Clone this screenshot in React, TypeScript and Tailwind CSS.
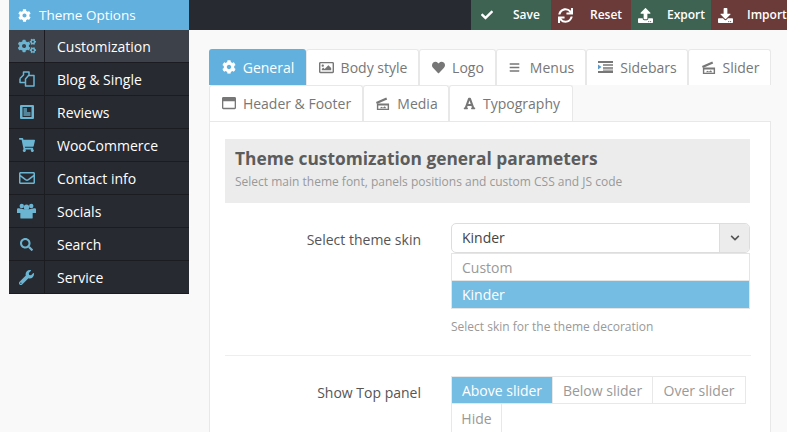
import React from "react";
import {
  FaCog, FaCogs, FaShoppingCart, FaRegEnvelope, FaSearch, FaWrench,
  FaCheck, FaSync, FaUpload, FaDownload, FaRegImage, FaHeart, FaBars, FaRegWindowMaximize,
  FaFont, FaChevronDown,
} from "react-icons/fa";

type IconT = React.ComponentType<{ className?: string }>;

const ReviewsIcon: IconT = ({ className }) => (
  <svg viewBox="0 0 14 14" className={className} fill="currentColor">
    <path fillRule="evenodd" d="M1 0h12a1 1 0 0 1 1 1v12a1 1 0 0 1-1 1H1a1 1 0 0 1-1-1V1a1 1 0 0 1 1-1zm1.5 2v10h9V2h-9z" />
    <path d="M3.5 3H7v4h3.5v4h-7z" opacity=".65" />
  </svg>
);

const BlogIcon: IconT = ({ className }) => (
  <svg viewBox="0 0 16 16" className={className} fill="none" stroke="currentColor" strokeWidth="1.5" strokeLinejoin="round">
    <path d="M1 7.5 4.5 4V1H10v3" />
    <path d="M1 7.5V11.5h5" />
    <path d="M6.5 8 9.5 4.5H15V15H6.5z" />
  </svg>
);

const SocialsIcon: IconT = ({ className }) => (
  <svg viewBox="0 0 20 16" className={className} fill="currentColor">
    <circle cx="5" cy="2.7" r="2.3" />
    <circle cx="15" cy="2.7" r="2.3" />
    <circle cx="10" cy="4" r="2.8" />
    <path d="M0 6.5 C0 5.3 1 5 2 5.2 L7 6.2 H13 L18 5.2 C19 5 20 5.3 20 6.5 V10 H16.5 V15 C16.5 15.6 16 16 15.4 16 H4.6 C4 16 3.5 15.6 3.5 15 V10 H0z" />
  </svg>
);

const SliderIcon: IconT = ({ className }) => (
  <svg viewBox="0 0 16 16" className={className} fill="currentColor">
    <path d="M1 6.5 12 1.5l1 2.2L2 8.6z" />
    <path fillRule="evenodd" d="M2 8h13v7H2V8zm1.5 2v3.5h10V10h-10z" />
    <path d="M5 13l2-1.5 1.5 1 2-1.5 1.5 2z" />
  </svg>
);

const SidebarsIcon: IconT = ({ className }) => (
  <svg viewBox="0 0 15 12" className={className} fill="currentColor">
    <path d="M0 0h15v2H0zM5 3.3h10v1.4H5zM5 6.3h10v1.4H5zM0 10h15v2H0z" />
    <path d="M0 3.5 3.5 6 0 8.5z" fill="#5c9ac9" />
    <path d="M5 8.6h10v1H5z" />
  </svg>
);

const side: { label: string; Icon: IconT; size: string; active?: boolean }[] = [
  { label: "Customization", Icon: FaCogs, size: "w-[18px] h-[18px]", active: true },
  { label: "Blog & Single", Icon: BlogIcon, size: "w-[16px] h-[16px]" },
  { label: "Reviews", Icon: ReviewsIcon, size: "w-[14px] h-[14px]" },
  { label: "WooCommerce", Icon: FaShoppingCart, size: "w-[16px] h-[16px]" },
  { label: "Contact info", Icon: FaRegEnvelope, size: "w-[16px] h-[16px]" },
  { label: "Socials", Icon: SocialsIcon, size: "w-[19px] h-[16px]" },
  { label: "Search", Icon: FaSearch, size: "w-[13px] h-[13px]" },
  { label: "Service", Icon: FaWrench, size: "w-[15px] h-[15px]" },
];

const actions: { label: string; Icon: IconT; bg: string; pad: string; gap: string; size: string }[] = [
  { label: "Save", Icon: FaCheck, bg: "bg-[#3f6353]", pad: "pl-[10px]", gap: "gap-[20px]", size: "w-[12px] h-[12px]" },
  { label: "Reset", Icon: FaSync, bg: "bg-[#6b3b39]", pad: "pl-[7px]", gap: "gap-[17px]", size: "w-[15px] h-[15px]" },
  { label: "Export", Icon: FaUpload, bg: "bg-[#3f6353]", pad: "pl-[7px]", gap: "gap-[14px]", size: "w-[15px] h-[15px]" },
  { label: "Import", Icon: FaDownload, bg: "bg-[#6b3b39]", pad: "pl-[7px]", gap: "gap-[14px]", size: "w-[15px] h-[15px]" },
];

type T = { label: string; Icon: IconT; w: string; size: string; active?: boolean; gap?: string };

const row1: T[] = [
  { label: "General", Icon: FaCog, w: "w-[97px]", size: "w-[14px] h-[14px]", active: true },
  { label: "Body style", Icon: FaRegImage, w: "w-[113px]", size: "w-[15px] h-[15px]" },
  { label: "Logo", Icon: FaHeart, w: "w-[77px]", size: "w-[13px] h-[13px]" },
  { label: "Menus", Icon: FaBars, w: "w-[90px]", size: "w-[11px] h-[11px]", gap: "gap-[10px]" },
  { label: "Sidebars", Icon: SidebarsIcon, w: "w-[102px]", size: "w-[15px] h-[12px]" },
  { label: "Slider", Icon: SliderIcon, w: "w-[83px]", size: "w-[15px] h-[15px]" },
];
const row2: T[] = [
  { label: "Header & Footer", Icon: FaRegWindowMaximize, w: "w-[154px]", size: "w-[14px] h-[14px]" },
  { label: "Media", Icon: SliderIcon, w: "w-[86px]", size: "w-[15px] h-[15px]" },
  { label: "Typography", Icon: FaFont, w: "w-[124px]", size: "w-[13px] h-[13px]" },
];

const Tab = ({ t }: { t: T }) => (
  <div
    className={`${t.w} ${t.gap ?? "gap-[7px]"} h-[36px] shrink-0 flex items-center justify-center rounded-t-[3px] text-[14px] pl-[1px] ${
      t.active ? "bg-[#61b0de] text-white" : "bg-white text-[#777777] border border-b-0 border-[#e8e8e8] pb-[1px]"
    }`}
  >
    <t.Icon className={t.size} />
    <span>{t.label}</span>
  </div>
);

export default function App() {
  return (
    <div className="w-[787px] h-[432px] overflow-hidden flex bg-[#f9f9f9] pl-[9px] font-['Open_Sans',sans-serif]">
      <aside className="w-[180px] shrink-0">
        <div className="h-[30px] bg-[#61b0de] text-white text-[13.5px] flex items-center pl-[9px] gap-[8px]">
          <FaCog className="w-[13px] h-[13px]" />
          <span>Theme Options</span>
        </div>
        {side.map(({ label, Icon, active, size }) => (
          <div
            key={label}
            className={`h-[33px] flex border-b border-[#1a1c21] text-white text-[14px] font-medium ${
              active ? "bg-[#3d4149]" : "bg-[#272a31]"
            }`}
          >
            <div className="w-[36px] flex items-center justify-center border-r border-[#1a1c21] text-[#6bb5d2]">
              <Icon className={size} />
            </div>
            <div className="flex items-center pl-[12px]">{label}</div>
          </div>
        ))}
      </aside>
      <main className="flex-1 min-w-0">
        <div className="h-[30px] bg-[#272a31] flex pl-[282px] text-white text-[12px] font-semibold">
          {actions.map(({ label, Icon, bg, pad, gap, size }) => (
            <div key={label} className={`w-[80px] shrink-0 ${bg} ${pad} ${gap} flex items-center`}>
              <Icon className={size} />
              <span>{label}</span>
            </div>
          ))}
        </div>
        <div className="w-[562px] ml-[20px] mt-[19px]">
          <div className="flex">
            {row1.map((t) => <Tab key={t.label} t={t} />)}
          </div>
          <div className="flex">
            {row2.map((t) => <Tab key={t.label} t={t} />)}
          </div>
          <div className="bg-white border border-[#e8e8e8] px-[15px] pt-[17px] pb-[40px]">
            <div className="h-[64px] w-[525px] bg-[#ececec] px-[10px] pt-[7px]">
              <div className="text-[17.35px] font-bold text-[#5c5c5c] leading-[24px]">Theme customization general parameters</div>
              <div className="text-[12px] text-[#999999] leading-[20px] mt-[2px]">Select main theme font, panels positions and custom CSS and JS code</div>
            </div>
            <div className="flex mt-[20px]">
              <div className="w-[196px] pt-[6px] text-right text-[14px] text-[#555555]">Select theme skin</div>
              <div className="ml-[30px] w-[299px]">
                <div className="h-[30px] border border-[#dddddd] rounded-[5px] flex overflow-hidden bg-white">
                  <div className="flex-1 pl-[10px] text-[14px] leading-[28px] text-[#444444]">Kinder</div>
                  <div className="w-[30px] bg-[#ececec] border-l border-[#dddddd] flex items-center justify-center text-[#555555]">
                    <FaChevronDown className="w-[10px] h-[10px]" />
                  </div>
                </div>
                <div className="border border-[#e5e5e5] text-[14px]">
                  <div className="h-[27px] pl-[10px] leading-[27px] text-[#999999] border-b border-[#e5e5e5]">Custom</div>
                  <div className="h-[27px] pl-[10px] leading-[27px] text-white bg-[#75bde3]">Kinder</div>
                </div>
                <div className="text-[12px] text-[#999999] mt-[9px] leading-[18px]">Select skin for the theme decoration</div>
              </div>
            </div>
            <div className="w-[526px] border-t border-[#eeeeee] mt-[19px]"></div>
            <div className="flex mt-[20px]">
              <div className="w-[196px] pt-[6px] text-right text-[14px] text-[#555555]">Show Top panel</div>
              <div className="ml-[30px] w-[299px] flex flex-wrap text-[14px] text-[#999999]">
                <div className="h-[28px] w-[101px] border border-[#e8e8e8] border-r-0 bg-[#e8e8e8]">
                  <div className="h-full bg-[#75bde3] text-white flex items-center justify-center">Above slider</div>
                </div>
                <div className="h-[28px] w-[101px] border border-[#e8e8e8] flex items-center justify-center">Below slider</div>
                <div className="h-[28px] w-[93px] border border-l-0 border-[#e8e8e8] flex items-center justify-center">Over slider</div>
                <div className="h-[28px] w-[51px] border-x border-[#e8e8e8] flex items-center justify-center">Hide</div>
                <div className="w-full -mt-[2px] pl-[6px] text-[12px] leading-[18px] text-[#777777]">Select position of the top panel bar</div>
              </div>
            </div>
          </div>
        </div>
      </main>
    </div>
  );
}
